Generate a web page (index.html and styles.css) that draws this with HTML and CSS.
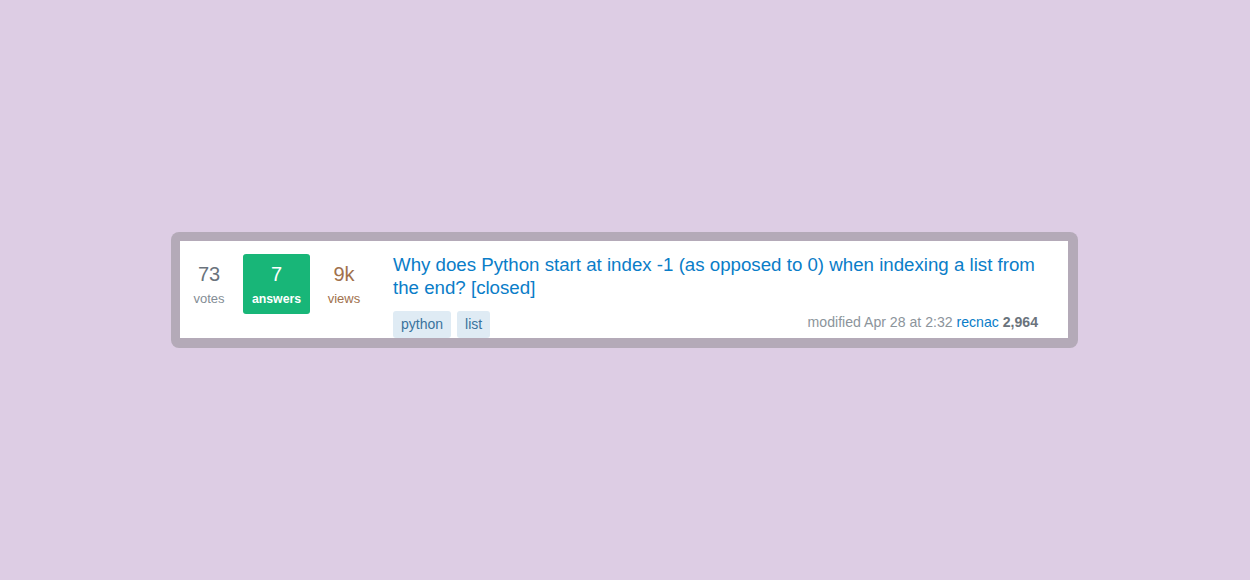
FILE: index.html
```html
<!DOCTYPE html>
<html lang="en">
<head>
  <meta charset="UTF-8">
  <meta name="viewport" content="width=device-width, initial-scale=1.0">
  <title>Question summary</title>
  <link rel="stylesheet" href="styles.css">
</head>
<body>
  <div class="frame">
    <div class="question">
      <div class="stats">
        <div class="stat votes">
          <span class="num">73</span>
          <span class="label">votes</span>
        </div>
        <div class="stat answers">
          <span class="num">7</span>
          <span class="label">answers</span>
        </div>
        <div class="stat views">
          <span class="num">9k</span>
          <span class="label">views</span>
        </div>
      </div>
      <div class="summary">
        <a class="title" href="#">Why does Python start at index -1 (as opposed to 0) when indexing a list from the end? [closed]</a>
        <div class="bottom">
          <div class="tags">
            <a class="tag" href="#">python</a>
            <a class="tag" href="#">list</a>
          </div>
          <div class="meta">
            modified Apr 28 at 2:32 <a class="user" href="#">recnac</a> <b>2,964</b>
          </div>
        </div>
      </div>
    </div>
  </div>
</body>
</html>
```

FILE: styles.css
```css
body {
  margin: 0;
  height: 580px;
  background-color: #ddcde4;
  font-family: Arial, "Liberation Sans", sans-serif;
  display: flex;
  justify-content: center;
  align-items: flex-start;
}
.frame {
  margin-top: 232px;
  margin-left: -1px;
  width: 888px;
  padding: 9px 10px 10px 9px;
  background: #b4aab8;
  border-radius: 8px;
}
.question {
  display: flex;
  background: #fff;
  height: 97px;
  overflow: hidden;
  box-sizing: border-box;
  padding: 12px 30px 0 10px;
}
.stats {
  display: flex;
  align-items: flex-start;
  padding-top: 1px;
}
.stat {
  display: flex;
  flex-direction: column;
  align-items: center;
  height: 60px;
  box-sizing: border-box;
  padding-top: 8px;
}
.stat .num {
  font-size: 20px;
  line-height: 24px;
}
.stat .label {
  font-size: 13px;
  line-height: 16px;
  margin-top: 5px;
}
.votes {
  width: 38px;
  color: #6a737c;
}
.votes .label {
  color: #848d95;
}
.answers {
  width: 67px;
  margin-left: 15px;
  background: #18b678;
  border-radius: 3px;
  color: #fff;
}
.answers .label {
  font-size: 12.3px;
  font-weight: bold;
}
.views {
  width: 40px;
  margin-left: 14px;
  color: #a0714c;
}
.summary {
  flex: 1;
  margin-left: 29px;
  display: flex;
  flex-direction: column;
}
.title {
  font-size: 18.7px;
  line-height: 23px;
  color: #0a7dc8;
  text-decoration: none;
}
.bottom {
  display: flex;
  justify-content: space-between;
  align-items: center;
  margin-top: 12px;
}
.tags {
  display: flex;
  gap: 6px;
}
.tag {
  background: #dfebf4;
  color: #39739d;
  font-size: 14px;
  line-height: 27px;
  padding: 0 8px;
  border-radius: 3px;
  text-decoration: none;
}
.meta {
  font-size: 14.1px;
  color: #8c949b;
  margin-top: -5px;
}
.meta .user {
  color: #0a7dc8;
  text-decoration: none;
}
.meta b {
  color: #6a737c;
}
```
